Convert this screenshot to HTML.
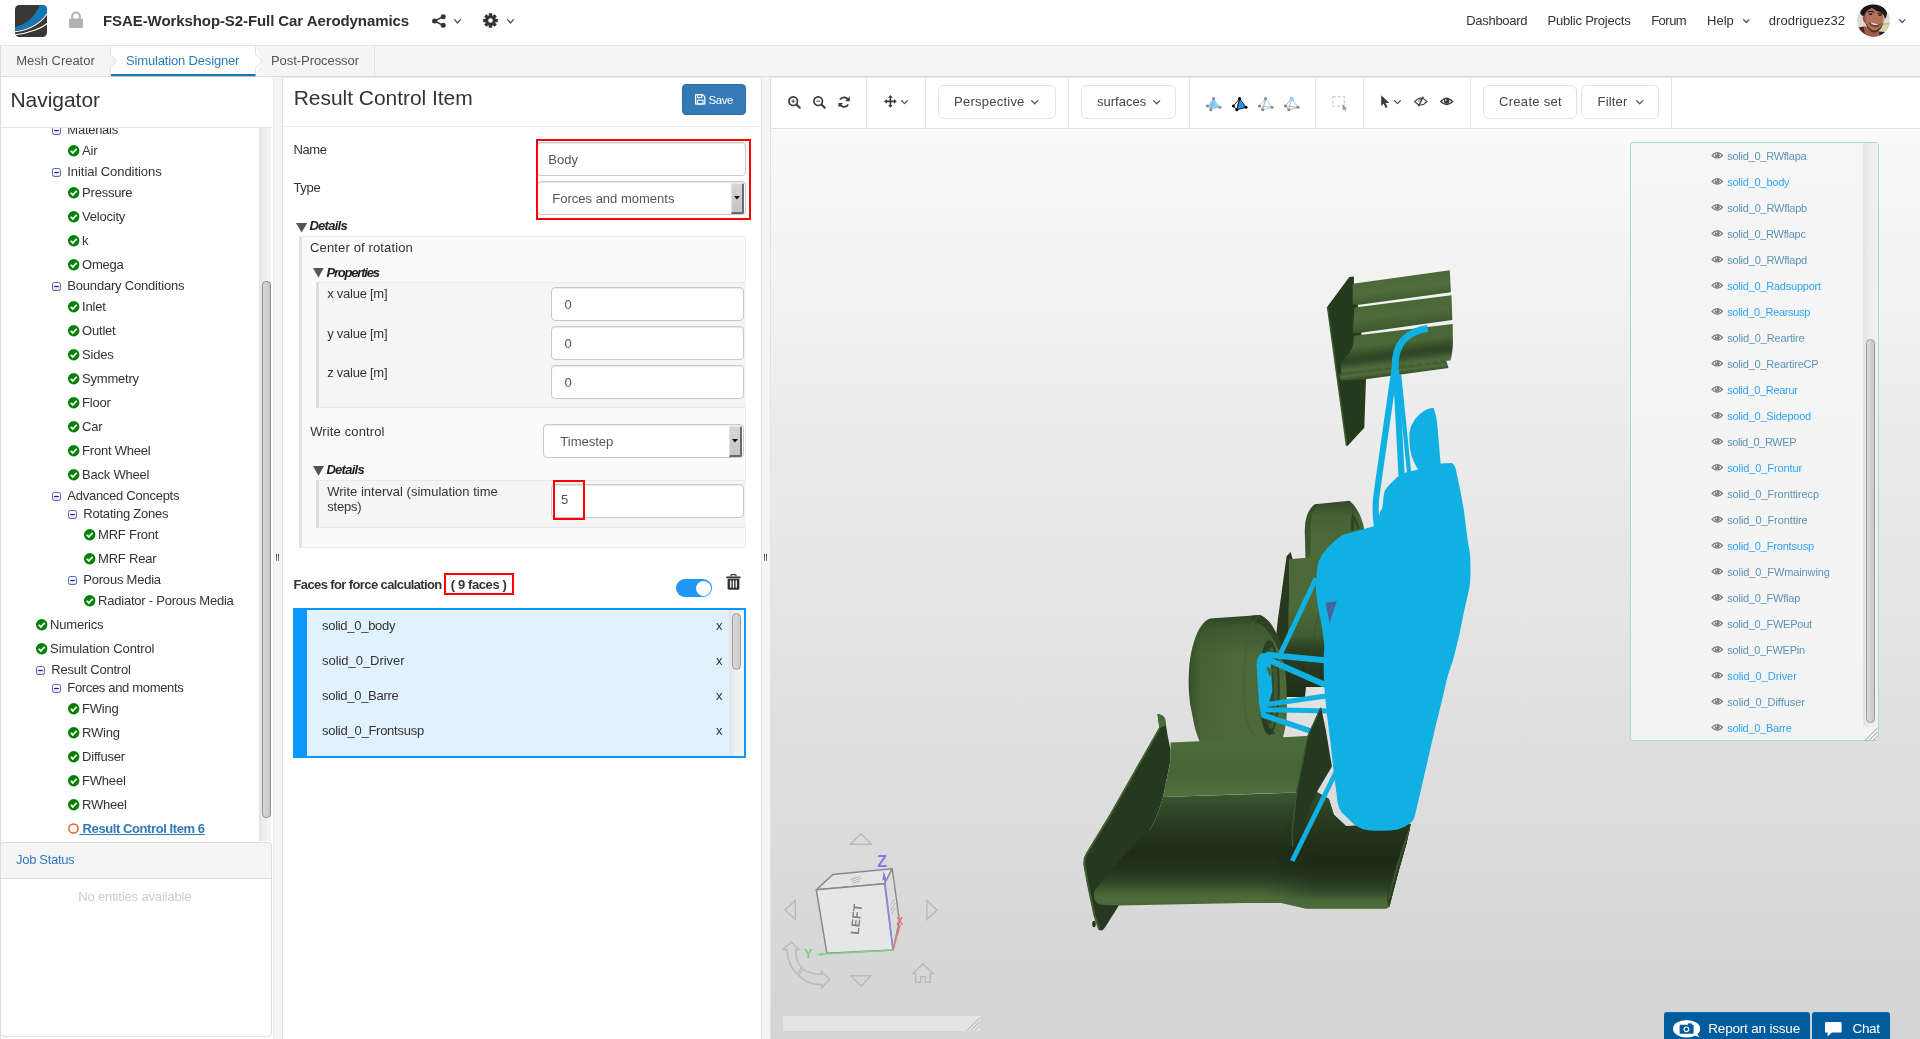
<!DOCTYPE html>
<html><head><meta charset="utf-8"><title>SimScale Workbench</title>
<style>
html,body{margin:0;padding:0;}
body{width:1920px;height:1039px;overflow:hidden;position:relative;background:#f5f5f5;font-family:"Liberation Sans",sans-serif;color:#333;}
.a{position:absolute;box-sizing:border-box;}
.t{position:absolute;line-height:0;white-space:pre;font-family:"Liberation Sans",sans-serif;}
svg{position:absolute;overflow:visible;}
#wrap{position:absolute;left:0;top:0;width:1920px;height:1039px;overflow:hidden;will-change:transform;}

</style></head>
<body>
<div id="wrap">
<div class="a" style="left:0;top:0;width:1920px;height:46px;background:#fff;border-bottom:1px solid #e4e4e4"></div>
<svg style="left:15px;top:5px" width="32" height="32" viewBox="0 0 32 32">
<defs><clipPath id="lg"><rect x="0" y="0" width="32" height="32" rx="4.5" ry="4.5"/></clipPath></defs>
<g clip-path="url(#lg)">
<rect width="32" height="32" fill="#3a3634"/>
<path d="M0 21.9 C 10 20 20 12 24.75 0 L32 0 L32 7.5 C 26 18 13 24.5 0 26 Z" fill="#1277b5"/>
<path d="M0 26.7 C 13 25.2 26 18.8 32 8.7" fill="none" stroke="#fff" stroke-width="1.1"/>
<path d="M0 29.7 C 14 28.2 27 23 32 18.4" fill="none" stroke="#fff" stroke-width="1.1"/>
</g></svg>
<svg style="left:69px;top:11px" width="14" height="17" viewBox="0 0 14 17">
<path d="M3.2 8 V5.2 a3.8 3.8 0 0 1 7.6 0 V8" fill="none" stroke="#b2b2b2" stroke-width="2"/>
<rect x="0" y="7.5" width="14" height="9.5" rx="1.2" fill="#b2b2b2"/></svg>
<span class="t" style="left:103.00px;top:20.80px;font-size:15px;color:#2f2f2f;font-weight:bold;letter-spacing:-0.085px;">FSAE-Workshop-S2-Full Car Aerodynamics</span>
<svg style="left:431.5px;top:13.5px" width="14" height="14" viewBox="0 0 14 14">
<g fill="#333"><circle cx="2.6" cy="7" r="2.5"/><circle cx="11.2" cy="2.7" r="2.5"/><circle cx="11.2" cy="11.3" r="2.5"/></g>
<path d="M2.6 7 L11.2 2.7 M2.6 7 L11.2 11.3" stroke="#333" stroke-width="1.5" fill="none"/></svg>
<svg style="left:453.5px;top:19px" width="7" height="5" viewBox="0 0 7 5"><path d="M0.6 0.6 L3.5 4 L6.4 0.6" fill="none" stroke="#555" stroke-width="1.3" stroke-linecap="round" stroke-linejoin="round"/></svg>
<svg style="left:483px;top:13px" width="15" height="15" viewBox="-7.5 -7.5 15 15">
<g fill="#333"><circle r="5.2"/>
<rect x="-1.7" y="-7.3" width="3.4" height="14.6" rx="0.4"/>
<rect x="-1.7" y="-7.3" width="3.4" height="14.6" rx="0.4" transform="rotate(45)"/><rect x="-1.7" y="-7.3" width="3.4" height="14.6" rx="0.4" transform="rotate(90)"/><rect x="-1.7" y="-7.3" width="3.4" height="14.6" rx="0.4" transform="rotate(135)"/></g>
<circle r="2.3" fill="#fff"/></svg>
<svg style="left:507px;top:19px" width="7" height="5" viewBox="0 0 7 5"><path d="M0.6 0.6 L3.5 4 L6.4 0.6" fill="none" stroke="#555" stroke-width="1.3" stroke-linecap="round" stroke-linejoin="round"/></svg>
<span class="t" style="left:1466.30px;top:20.50px;font-size:13px;color:#333;letter-spacing:-0.312px;">Dashboard</span>
<span class="t" style="left:1547.50px;top:20.50px;font-size:13px;color:#333;letter-spacing:-0.199px;">Public Projects</span>
<span class="t" style="left:1651.20px;top:20.50px;font-size:13px;color:#333;letter-spacing:-0.512px;">Forum</span>
<span class="t" style="left:1707.00px;top:20.50px;font-size:13px;color:#333;letter-spacing:0.013px;">Help</span>
<svg style="left:1743px;top:19px" width="6.5" height="4.5" viewBox="0 0 6.5 4.5"><path d="M0.6 0.6 L3.25 3.5 L5.9 0.6" fill="none" stroke="#555" stroke-width="1.3" stroke-linecap="round" stroke-linejoin="round"/></svg>
<span class="t" style="left:1768.80px;top:20.50px;font-size:13px;color:#333;letter-spacing:0.026px;">drodriguez32</span>
<svg style="left:1899px;top:19px" width="6.5" height="4.5" viewBox="0 0 6.5 4.5"><path d="M0.6 0.6 L3.25 3.5 L5.9 0.6" fill="none" stroke="#555" stroke-width="1.3" stroke-linecap="round" stroke-linejoin="round"/></svg>
<svg style="left:1857px;top:3.5px" width="33" height="33" viewBox="0 0 33 33">
<defs><clipPath id="av"><circle cx="16.5" cy="16.5" r="16.4"/></clipPath>
<filter id="avb" x="-10%" y="-10%" width="120%" height="120%"><feGaussianBlur stdDeviation="0.55"/></filter></defs>
<g clip-path="url(#av)"><g filter="url(#avb)">
<rect width="33" height="33" fill="#dcdcd7"/>
<path d="M25 19.5 L33 19 L33 29 L22 28 Z" fill="#d9d2ae"/>
<path d="M26 19.3 L33 18.8 L33 20.6 L26 21 Z" fill="#c9b58e"/>
<path d="M1 23.5 L7 22.4 L10 33 L1 33 Z" fill="#5a2228"/>
<path d="M21 27.5 L29 28 L26 33 L20 33 Z" fill="#1b2344"/>
<path d="M7 22 Q12 24 22 26 L22.5 33 L8 33 Z" fill="#9a5f47"/>
<path d="M7.8 9 Q7 3.5 16 2.5 Q25 3 26.5 10 L26.5 18 Q25.5 25 20 27.8 Q16.5 29.3 13 26.5 Q8.5 22 7.6 15 Z" fill="#b27358"/>
<path d="M8 11 Q9 16 8.4 19.5 Q5.8 17.5 5.6 13.5 Q6 11 8 11 Z" fill="#8a4f3c"/>
<path d="M8 17.5 Q9 23 14 27.6 Q17 29.6 20.5 27.6 Q25 24.5 26 18.5 Q24.5 23 20.5 25.6 Q17 27.6 14 25.2 Q10 21.8 8 17.5 Z" fill="#4a2f28"/>
<path d="M11 18.5 Q14 18 15.5 19.6 Q18 21.8 22 20.8 Q23.5 19.8 24.5 18.6 Q23.6 22.2 20 23.4 Q16 23.8 13.5 21.4 Q12 19.8 11 18.5 Z" fill="#7c4236"/>
<path d="M13.8 19.2 Q17 21.6 20.4 21 L20 20 Q16.8 20 14.4 18.6 Z" fill="#f1e7e2"/>
<path d="M3.2 9.5 Q3.5 4 9.5 1.8 Q16.5 -0.8 23.5 2 Q29.5 4.8 30 9.5 Q29.8 13 27.6 15.4 Q27.8 10.5 24 8.4 Q19 7.2 15 4 Q12.5 4.6 10.4 6.4 Q8.2 8.4 7.4 12 Q5 12.4 3.2 9.5 Z" fill="#1d1818"/>
<path d="M10.4 7.4 Q13.5 5.8 17.6 8 L17.4 8.9 Q13.6 7.2 10.6 8.6 Z" fill="#2a1a18"/>
<path d="M20 9.2 Q23 8.4 25.6 9.4 L25.5 10.2 Q23 9.5 20.2 10.1 Z" fill="#2a1a18"/>
<ellipse cx="13.6" cy="10.2" rx="1.9" ry="0.9" fill="#3b241f"/><ellipse cx="23" cy="11.2" rx="1.8" ry="0.9" fill="#3b241f"/>
</g></g></svg>
<div class="a" style="left:0;top:46px;width:1920px;height:31px;background:#f5f5f5;border-bottom:1px solid #ddd"></div>
<div class="a" style="left:0;top:46px;width:1px;height:31px;background:#ddd"></div>
<svg style="left:104px;top:46px" width="166" height="31" viewBox="0 0 166 31">
<path d="M6.5 0 L151.5 0 L158 15 L151.5 30 L6.5 30 L6.5 22 L12.5 15 L6.5 8 Z" fill="#fff"/>
<path d="M6.5 0 L6.5 8 L12.5 15 L6.5 22 L6.5 30" fill="none" stroke="#e3e3e3" stroke-width="1"/>
<path d="M151.5 0 L151.5 8 L158 15 L151.5 22 L151.5 30" fill="none" stroke="#e3e3e3" stroke-width="1"/>
<rect x="7" y="28" width="144.5" height="2.2" fill="#1b75b3"/>
</svg>
<div class="a" style="left:374px;top:46px;width:1px;height:30px;background:#e3e3e3"></div>
<span class="t" style="left:16.30px;top:60.50px;font-size:13px;color:#555;letter-spacing:-0.029px;">Mesh Creator</span>
<span class="t" style="left:126.00px;top:60.50px;font-size:13px;color:#2c7db7;letter-spacing:-0.16px;">Simulation Designer</span>
<span class="t" style="left:271.00px;top:60.50px;font-size:13px;color:#555;letter-spacing:-0.062px;">Post-Processor</span>
<div class="a" style="left:0;top:77px;width:273px;height:962px;background:#fff;border-left:1px solid #ddd"></div>
<div class="a" style="left:273px;top:77px;width:1px;height:962px;background:#ebebeb"></div>
<span class="t" style="left:10.50px;top:99.72px;font-size:21px;color:#333;letter-spacing:-0.043px;">Navigator</span>
<div class="a" style="left:1px;top:127px;width:271px;height:1px;background:#e6e6e6"></div>
<div class="a" style="left:282px;top:77px;width:480px;height:962px;background:#fff;border-left:1px solid #e2e2e2;border-right:1px solid #e2e2e2;border-top:1px solid #e6e6e6"></div>
<div class="a" style="left:770px;top:77px;width:1150px;height:962px;background:#fff;border-left:1px solid #e2e2e2;border-top:1px solid #e6e6e6"></div>
<div class="a" style="left:276px;top:554px;width:1px;height:7px;background:linear-gradient(180deg,#3c3c3c,#8e8e8e)"></div><div class="a" style="left:278px;top:554px;width:1px;height:7px;background:linear-gradient(180deg,#3c3c3c,#8e8e8e)"></div>
<div class="a" style="left:764px;top:554px;width:1px;height:7px;background:linear-gradient(180deg,#3c3c3c,#8e8e8e)"></div><div class="a" style="left:766px;top:554px;width:1px;height:7px;background:linear-gradient(180deg,#3c3c3c,#8e8e8e)"></div>
<div class="a" style="left:1px;top:128px;width:258px;height:713px;overflow:hidden"><div class="a" style="left:-1px;top:-128px;width:0;height:0">
<svg style="left:52px;top:125.9px" width="9" height="9" viewBox="0 0 9 9"><defs><linearGradient id="mg" x1="0" y1="0" x2="0" y2="1"><stop offset="0.45" stop-color="#fff"/><stop offset="1" stop-color="#d8d8d8"/></linearGradient></defs><rect x="0.5" y="0.5" width="8" height="8" rx="1.8" fill="url(#mg)" stroke="#5566c0" stroke-width="1"/><rect x="2.2" y="3.9" width="4.6" height="1.2" fill="#1010c8"/></svg>
<span class="t" style="left:67.30px;top:129.70px;font-size:13px;color:#333;letter-spacing:-0.22px;">Materials</span>
<svg style="left:67.8px;top:144.6px" width="11.4" height="11.4" viewBox="0 0 12 12"><circle cx="6" cy="6" r="6" fill="#008000"/><path d="M2.9 6.2 L5.1 8.4 L9.2 4.1" fill="none" stroke="#fff" stroke-width="1.9" stroke-linecap="butt" stroke-linejoin="miter"/></svg>
<span class="t" style="left:82.10px;top:150.90px;font-size:13px;color:#333;letter-spacing:-0.22px;">Air</span>
<svg style="left:52px;top:167.9px" width="9" height="9" viewBox="0 0 9 9"><defs><linearGradient id="mg" x1="0" y1="0" x2="0" y2="1"><stop offset="0.45" stop-color="#fff"/><stop offset="1" stop-color="#d8d8d8"/></linearGradient></defs><rect x="0.5" y="0.5" width="8" height="8" rx="1.8" fill="url(#mg)" stroke="#5566c0" stroke-width="1"/><rect x="2.2" y="3.9" width="4.6" height="1.2" fill="#1010c8"/></svg>
<span class="t" style="left:67.30px;top:171.70px;font-size:13px;color:#333;letter-spacing:-0.061px;">Initial Conditions</span>
<svg style="left:67.8px;top:186.6px" width="11.4" height="11.4" viewBox="0 0 12 12"><circle cx="6" cy="6" r="6" fill="#008000"/><path d="M2.9 6.2 L5.1 8.4 L9.2 4.1" fill="none" stroke="#fff" stroke-width="1.9" stroke-linecap="butt" stroke-linejoin="miter"/></svg>
<span class="t" style="left:82.10px;top:192.90px;font-size:13px;color:#333;letter-spacing:-0.22px;">Pressure</span>
<svg style="left:67.8px;top:210.6px" width="11.4" height="11.4" viewBox="0 0 12 12"><circle cx="6" cy="6" r="6" fill="#008000"/><path d="M2.9 6.2 L5.1 8.4 L9.2 4.1" fill="none" stroke="#fff" stroke-width="1.9" stroke-linecap="butt" stroke-linejoin="miter"/></svg>
<span class="t" style="left:82.10px;top:216.90px;font-size:13px;color:#333;letter-spacing:-0.22px;">Velocity</span>
<svg style="left:67.8px;top:234.6px" width="11.4" height="11.4" viewBox="0 0 12 12"><circle cx="6" cy="6" r="6" fill="#008000"/><path d="M2.9 6.2 L5.1 8.4 L9.2 4.1" fill="none" stroke="#fff" stroke-width="1.9" stroke-linecap="butt" stroke-linejoin="miter"/></svg>
<span class="t" style="left:82.10px;top:240.90px;font-size:13px;color:#333;letter-spacing:-0.22px;">k</span>
<svg style="left:67.8px;top:258.6px" width="11.4" height="11.4" viewBox="0 0 12 12"><circle cx="6" cy="6" r="6" fill="#008000"/><path d="M2.9 6.2 L5.1 8.4 L9.2 4.1" fill="none" stroke="#fff" stroke-width="1.9" stroke-linecap="butt" stroke-linejoin="miter"/></svg>
<span class="t" style="left:82.10px;top:264.90px;font-size:13px;color:#333;letter-spacing:-0.22px;">Omega</span>
<svg style="left:52px;top:281.90000000000003px" width="9" height="9" viewBox="0 0 9 9"><defs><linearGradient id="mg" x1="0" y1="0" x2="0" y2="1"><stop offset="0.45" stop-color="#fff"/><stop offset="1" stop-color="#d8d8d8"/></linearGradient></defs><rect x="0.5" y="0.5" width="8" height="8" rx="1.8" fill="url(#mg)" stroke="#5566c0" stroke-width="1"/><rect x="2.2" y="3.9" width="4.6" height="1.2" fill="#1010c8"/></svg>
<span class="t" style="left:67.30px;top:285.70px;font-size:13px;color:#333;letter-spacing:-0.195px;">Boundary Conditions</span>
<svg style="left:67.8px;top:300.6px" width="11.4" height="11.4" viewBox="0 0 12 12"><circle cx="6" cy="6" r="6" fill="#008000"/><path d="M2.9 6.2 L5.1 8.4 L9.2 4.1" fill="none" stroke="#fff" stroke-width="1.9" stroke-linecap="butt" stroke-linejoin="miter"/></svg>
<span class="t" style="left:82.10px;top:306.90px;font-size:13px;color:#333;letter-spacing:-0.22px;">Inlet</span>
<svg style="left:67.8px;top:324.6px" width="11.4" height="11.4" viewBox="0 0 12 12"><circle cx="6" cy="6" r="6" fill="#008000"/><path d="M2.9 6.2 L5.1 8.4 L9.2 4.1" fill="none" stroke="#fff" stroke-width="1.9" stroke-linecap="butt" stroke-linejoin="miter"/></svg>
<span class="t" style="left:82.10px;top:330.90px;font-size:13px;color:#333;letter-spacing:-0.22px;">Outlet</span>
<svg style="left:67.8px;top:348.6px" width="11.4" height="11.4" viewBox="0 0 12 12"><circle cx="6" cy="6" r="6" fill="#008000"/><path d="M2.9 6.2 L5.1 8.4 L9.2 4.1" fill="none" stroke="#fff" stroke-width="1.9" stroke-linecap="butt" stroke-linejoin="miter"/></svg>
<span class="t" style="left:82.10px;top:354.90px;font-size:13px;color:#333;letter-spacing:-0.22px;">Sides</span>
<svg style="left:67.8px;top:372.6px" width="11.4" height="11.4" viewBox="0 0 12 12"><circle cx="6" cy="6" r="6" fill="#008000"/><path d="M2.9 6.2 L5.1 8.4 L9.2 4.1" fill="none" stroke="#fff" stroke-width="1.9" stroke-linecap="butt" stroke-linejoin="miter"/></svg>
<span class="t" style="left:82.10px;top:378.90px;font-size:13px;color:#333;letter-spacing:-0.22px;">Symmetry</span>
<svg style="left:67.8px;top:396.6px" width="11.4" height="11.4" viewBox="0 0 12 12"><circle cx="6" cy="6" r="6" fill="#008000"/><path d="M2.9 6.2 L5.1 8.4 L9.2 4.1" fill="none" stroke="#fff" stroke-width="1.9" stroke-linecap="butt" stroke-linejoin="miter"/></svg>
<span class="t" style="left:82.10px;top:402.90px;font-size:13px;color:#333;letter-spacing:-0.22px;">Floor</span>
<svg style="left:67.8px;top:420.6px" width="11.4" height="11.4" viewBox="0 0 12 12"><circle cx="6" cy="6" r="6" fill="#008000"/><path d="M2.9 6.2 L5.1 8.4 L9.2 4.1" fill="none" stroke="#fff" stroke-width="1.9" stroke-linecap="butt" stroke-linejoin="miter"/></svg>
<span class="t" style="left:82.10px;top:426.90px;font-size:13px;color:#333;letter-spacing:-0.22px;">Car</span>
<svg style="left:67.8px;top:444.6px" width="11.4" height="11.4" viewBox="0 0 12 12"><circle cx="6" cy="6" r="6" fill="#008000"/><path d="M2.9 6.2 L5.1 8.4 L9.2 4.1" fill="none" stroke="#fff" stroke-width="1.9" stroke-linecap="butt" stroke-linejoin="miter"/></svg>
<span class="t" style="left:82.10px;top:450.90px;font-size:13px;color:#333;letter-spacing:-0.22px;">Front Wheel</span>
<svg style="left:67.8px;top:468.6px" width="11.4" height="11.4" viewBox="0 0 12 12"><circle cx="6" cy="6" r="6" fill="#008000"/><path d="M2.9 6.2 L5.1 8.4 L9.2 4.1" fill="none" stroke="#fff" stroke-width="1.9" stroke-linecap="butt" stroke-linejoin="miter"/></svg>
<span class="t" style="left:82.10px;top:474.90px;font-size:13px;color:#333;letter-spacing:-0.22px;">Back Wheel</span>
<svg style="left:52px;top:492.40000000000003px" width="9" height="9" viewBox="0 0 9 9"><defs><linearGradient id="mg" x1="0" y1="0" x2="0" y2="1"><stop offset="0.45" stop-color="#fff"/><stop offset="1" stop-color="#d8d8d8"/></linearGradient></defs><rect x="0.5" y="0.5" width="8" height="8" rx="1.8" fill="url(#mg)" stroke="#5566c0" stroke-width="1"/><rect x="2.2" y="3.9" width="4.6" height="1.2" fill="#1010c8"/></svg>
<span class="t" style="left:67.30px;top:496.20px;font-size:13px;color:#333;letter-spacing:-0.262px;">Advanced Concepts</span>
<svg style="left:68px;top:510.4px" width="9" height="9" viewBox="0 0 9 9"><defs><linearGradient id="mg" x1="0" y1="0" x2="0" y2="1"><stop offset="0.45" stop-color="#fff"/><stop offset="1" stop-color="#d8d8d8"/></linearGradient></defs><rect x="0.5" y="0.5" width="8" height="8" rx="1.8" fill="url(#mg)" stroke="#5566c0" stroke-width="1"/><rect x="2.2" y="3.9" width="4.6" height="1.2" fill="#1010c8"/></svg>
<span class="t" style="left:83.30px;top:514.20px;font-size:13px;color:#333;letter-spacing:-0.22px;">Rotating Zones</span>
<svg style="left:83.8px;top:528.6px" width="11.4" height="11.4" viewBox="0 0 12 12"><circle cx="6" cy="6" r="6" fill="#008000"/><path d="M2.9 6.2 L5.1 8.4 L9.2 4.1" fill="none" stroke="#fff" stroke-width="1.9" stroke-linecap="butt" stroke-linejoin="miter"/></svg>
<span class="t" style="left:98.10px;top:534.90px;font-size:13px;color:#333;letter-spacing:-0.22px;">MRF Front</span>
<svg style="left:83.8px;top:552.6px" width="11.4" height="11.4" viewBox="0 0 12 12"><circle cx="6" cy="6" r="6" fill="#008000"/><path d="M2.9 6.2 L5.1 8.4 L9.2 4.1" fill="none" stroke="#fff" stroke-width="1.9" stroke-linecap="butt" stroke-linejoin="miter"/></svg>
<span class="t" style="left:98.10px;top:558.90px;font-size:13px;color:#333;letter-spacing:-0.22px;">MRF Rear</span>
<svg style="left:68px;top:575.9px" width="9" height="9" viewBox="0 0 9 9"><defs><linearGradient id="mg" x1="0" y1="0" x2="0" y2="1"><stop offset="0.45" stop-color="#fff"/><stop offset="1" stop-color="#d8d8d8"/></linearGradient></defs><rect x="0.5" y="0.5" width="8" height="8" rx="1.8" fill="url(#mg)" stroke="#5566c0" stroke-width="1"/><rect x="2.2" y="3.9" width="4.6" height="1.2" fill="#1010c8"/></svg>
<span class="t" style="left:83.30px;top:579.70px;font-size:13px;color:#333;letter-spacing:-0.22px;">Porous Media</span>
<svg style="left:83.8px;top:594.6px" width="11.4" height="11.4" viewBox="0 0 12 12"><circle cx="6" cy="6" r="6" fill="#008000"/><path d="M2.9 6.2 L5.1 8.4 L9.2 4.1" fill="none" stroke="#fff" stroke-width="1.9" stroke-linecap="butt" stroke-linejoin="miter"/></svg>
<span class="t" style="left:98.10px;top:600.90px;font-size:13px;color:#333;letter-spacing:-0.235px;">Radiator - Porous Media</span>
<svg style="left:35.8px;top:618.6px" width="11.4" height="11.4" viewBox="0 0 12 12"><circle cx="6" cy="6" r="6" fill="#008000"/><path d="M2.9 6.2 L5.1 8.4 L9.2 4.1" fill="none" stroke="#fff" stroke-width="1.9" stroke-linecap="butt" stroke-linejoin="miter"/></svg>
<span class="t" style="left:50.10px;top:624.90px;font-size:13px;color:#333;letter-spacing:-0.22px;">Numerics</span>
<svg style="left:35.8px;top:642.6px" width="11.4" height="11.4" viewBox="0 0 12 12"><circle cx="6" cy="6" r="6" fill="#008000"/><path d="M2.9 6.2 L5.1 8.4 L9.2 4.1" fill="none" stroke="#fff" stroke-width="1.9" stroke-linecap="butt" stroke-linejoin="miter"/></svg>
<span class="t" style="left:50.10px;top:648.90px;font-size:13px;color:#333;letter-spacing:-0.107px;">Simulation Control</span>
<svg style="left:36px;top:665.9px" width="9" height="9" viewBox="0 0 9 9"><defs><linearGradient id="mg" x1="0" y1="0" x2="0" y2="1"><stop offset="0.45" stop-color="#fff"/><stop offset="1" stop-color="#d8d8d8"/></linearGradient></defs><rect x="0.5" y="0.5" width="8" height="8" rx="1.8" fill="url(#mg)" stroke="#5566c0" stroke-width="1"/><rect x="2.2" y="3.9" width="4.6" height="1.2" fill="#1010c8"/></svg>
<span class="t" style="left:51.30px;top:669.70px;font-size:13px;color:#333;letter-spacing:-0.22px;">Result Control</span>
<svg style="left:52px;top:683.9px" width="9" height="9" viewBox="0 0 9 9"><defs><linearGradient id="mg" x1="0" y1="0" x2="0" y2="1"><stop offset="0.45" stop-color="#fff"/><stop offset="1" stop-color="#d8d8d8"/></linearGradient></defs><rect x="0.5" y="0.5" width="8" height="8" rx="1.8" fill="url(#mg)" stroke="#5566c0" stroke-width="1"/><rect x="2.2" y="3.9" width="4.6" height="1.2" fill="#1010c8"/></svg>
<span class="t" style="left:67.30px;top:687.70px;font-size:13px;color:#333;letter-spacing:-0.334px;">Forces and moments</span>
<svg style="left:67.8px;top:702.6px" width="11.4" height="11.4" viewBox="0 0 12 12"><circle cx="6" cy="6" r="6" fill="#008000"/><path d="M2.9 6.2 L5.1 8.4 L9.2 4.1" fill="none" stroke="#fff" stroke-width="1.9" stroke-linecap="butt" stroke-linejoin="miter"/></svg>
<span class="t" style="left:82.10px;top:708.90px;font-size:13px;color:#333;letter-spacing:-0.22px;">FWing</span>
<svg style="left:67.8px;top:726.6px" width="11.4" height="11.4" viewBox="0 0 12 12"><circle cx="6" cy="6" r="6" fill="#008000"/><path d="M2.9 6.2 L5.1 8.4 L9.2 4.1" fill="none" stroke="#fff" stroke-width="1.9" stroke-linecap="butt" stroke-linejoin="miter"/></svg>
<span class="t" style="left:82.10px;top:732.90px;font-size:13px;color:#333;letter-spacing:-0.22px;">RWing</span>
<svg style="left:67.8px;top:750.6px" width="11.4" height="11.4" viewBox="0 0 12 12"><circle cx="6" cy="6" r="6" fill="#008000"/><path d="M2.9 6.2 L5.1 8.4 L9.2 4.1" fill="none" stroke="#fff" stroke-width="1.9" stroke-linecap="butt" stroke-linejoin="miter"/></svg>
<span class="t" style="left:82.10px;top:756.90px;font-size:13px;color:#333;letter-spacing:-0.22px;">Diffuser</span>
<svg style="left:67.8px;top:774.6px" width="11.4" height="11.4" viewBox="0 0 12 12"><circle cx="6" cy="6" r="6" fill="#008000"/><path d="M2.9 6.2 L5.1 8.4 L9.2 4.1" fill="none" stroke="#fff" stroke-width="1.9" stroke-linecap="butt" stroke-linejoin="miter"/></svg>
<span class="t" style="left:82.10px;top:780.90px;font-size:13px;color:#333;letter-spacing:-0.22px;">FWheel</span>
<svg style="left:67.8px;top:798.6px" width="11.4" height="11.4" viewBox="0 0 12 12"><circle cx="6" cy="6" r="6" fill="#008000"/><path d="M2.9 6.2 L5.1 8.4 L9.2 4.1" fill="none" stroke="#fff" stroke-width="1.9" stroke-linecap="butt" stroke-linejoin="miter"/></svg>
<span class="t" style="left:82.10px;top:804.90px;font-size:13px;color:#333;letter-spacing:-0.22px;">RWheel</span>
<svg style="left:68px;top:822.6px" width="11" height="11" viewBox="0 0 11 11"><circle cx="5.5" cy="5.5" r="4.6" fill="#fff" stroke="#e2602a" stroke-width="1.5"/></svg>
<span class="t" style="left:79.40px;top:828.50px;font-size:13px;color:#3278b4;font-weight:bold;text-decoration:underline;letter-spacing:-0.412px;"> Result Control Item 6</span>
</div></div>
<div class="a" style="left:259px;top:128px;width:12px;height:713px;background:linear-gradient(90deg,#e1e1e1,#ececec 30%,#f4f4f4)"></div>
<div class="a" style="left:262px;top:281px;width:9px;height:537px;background:linear-gradient(90deg,#d9d9d9,#c6c6c6);border:1px solid #8f8f8f;border-radius:4px"></div>
<div class="a" style="left:0;top:842px;width:272px;height:37px;background:#f5f5f5;border:1px solid #ddd;border-radius:4px 4px 0 0"></div>
<span class="t" style="left:16.10px;top:859.50px;font-size:13px;color:#337ab7;letter-spacing:-0.324px;">Job Status</span>
<div class="a" style="left:0;top:878px;width:272px;height:159px;background:#fff;border:1px solid #ddd;border-radius:0 0 4px 4px"></div>
<span class="t" style="left:78.20px;top:896.50px;font-size:13px;color:#cccccc;letter-spacing:-0.15px;">No entities available</span>
<span class="t" style="left:293.70px;top:97.72px;font-size:21px;color:#333;letter-spacing:-0.039px;">Result Control Item</span>
<div class="a" style="left:682px;top:84px;width:64px;height:31px;background:#337ab7;border:1px solid #2e6da4;border-radius:4px"></div>
<svg style="left:695px;top:94.3px" width="10.4" height="10.6" viewBox="0 0 10.4 10.6">
<path d="M0.6 0.6 H7.6 L9.8 2.8 V10 H0.6 Z" fill="none" stroke="#fff" stroke-width="1.2" stroke-linejoin="round"/>
<rect x="2.6" y="0.6" width="4.2" height="3" fill="none" stroke="#fff" stroke-width="1.1"/>
<rect x="2.4" y="6.2" width="5.6" height="3.8" fill="none" stroke="#fff" stroke-width="1.1"/></svg>
<span class="t" style="left:708.50px;top:99.92px;font-size:11.5px;color:#fff;letter-spacing:-0.43px;">Save</span>
<div class="a" style="left:283px;top:126px;width:478px;height:1px;background:#ececec"></div>
<span class="t" style="left:293.60px;top:149.50px;font-size:13px;color:#333;letter-spacing:-0.447px;">Name</span>
<span class="t" style="left:293.40px;top:188.00px;font-size:13px;color:#333;letter-spacing:-0.247px;">Type</span>
<div class="a" style="left:537px;top:142px;width:209px;height:34px;background:#fff;border:1px solid #c9c9c9;border-radius:4px;box-shadow:inset 0 1px 1px rgba(0,0,0,.09)"></div>
<span class="t" style="left:548.30px;top:159.80px;font-size:13px;color:#555;">Body</span>
<div class="a" style="left:537px;top:181px;width:209px;height:34px;background:#fff;border:1px solid #c9c9c9;border-radius:4px;box-shadow:inset 0 1px 1px rgba(0,0,0,.09)"></div><div class="a" style="left:731.4px;top:183px;width:12.6px;height:30.5px;background:linear-gradient(180deg,#d6d6d6,#c4c4c4);border-right:2px solid #6a6a6a;border-bottom:2px solid #6a6a6a;border-top:1px solid #e8e8e8;border-left:1px solid #e0e0e0;border-radius:0 2px 2px 0"></div><svg style="left:734.0px;top:196.3px" width="6" height="3.4" viewBox="0 0 6 3.4"><path d="M0 0 H6 L3 3.4 Z" fill="#111"/></svg>
<span class="t" style="left:552.30px;top:198.80px;font-size:13px;color:#555;">Forces and moments</span>
<div class="a" style="left:536px;top:139px;width:215px;height:81px;border:2px solid #f00"></div>
<svg style="left:295.8px;top:222.8px" width="11.2" height="9.6" viewBox="0 0 11.2 9.6"><path d="M0 0 H11.2 L5.6 9.6 Z" fill="#555"/></svg>
<span class="t" style="left:309.40px;top:225.90px;font-size:13px;color:#222;font-weight:bold;font-style:italic;letter-spacing:-0.734px;">Details</span>
<div class="a" style="left:299px;top:236.3px;width:447px;height:311.3px;background:#fafafa;border:1px solid #ececec;border-left:3px solid #e3e3e3"></div>
<span class="t" style="left:310.10px;top:248.40px;font-size:13px;color:#333;letter-spacing:0.136px;">Center of rotation</span>
<svg style="left:313.2px;top:268.2px" width="10.8" height="9.6" viewBox="0 0 10.8 9.6"><path d="M0 0 H10.8 L5.4 9.6 Z" fill="#555"/></svg>
<span class="t" style="left:326.50px;top:272.60px;font-size:13px;color:#222;font-weight:bold;font-style:italic;letter-spacing:-1.201px;">Properties</span>
<div class="a" style="left:316.4px;top:282.2px;width:429.6px;height:126px;background:#f5f5f5;border:1px solid #e9e9e9;border-left:3px solid #dcdcdc;border-right:none"></div>
<span class="t" style="left:327.20px;top:294.40px;font-size:13px;color:#333;letter-spacing:-0.251px;">x value [m]</span>
<div class="a" style="left:551px;top:287px;width:193px;height:34px;background:#fff;border:1px solid #c9c9c9;border-radius:4px;box-shadow:inset 0 1px 1px rgba(0,0,0,.09)"></div>
<span class="t" style="left:564.40px;top:304.80px;font-size:13px;color:#555;">0</span>
<span class="t" style="left:327.20px;top:333.50px;font-size:13px;color:#333;letter-spacing:-0.251px;">y value [m]</span>
<div class="a" style="left:551px;top:326px;width:193px;height:34px;background:#fff;border:1px solid #c9c9c9;border-radius:4px;box-shadow:inset 0 1px 1px rgba(0,0,0,.09)"></div>
<span class="t" style="left:564.40px;top:343.80px;font-size:13px;color:#555;">0</span>
<span class="t" style="left:327.20px;top:372.50px;font-size:13px;color:#333;letter-spacing:-0.251px;">z value [m]</span>
<div class="a" style="left:551px;top:365px;width:193px;height:34px;background:#fff;border:1px solid #c9c9c9;border-radius:4px;box-shadow:inset 0 1px 1px rgba(0,0,0,.09)"></div>
<span class="t" style="left:564.40px;top:382.80px;font-size:13px;color:#555;">0</span>
<span class="t" style="left:310.20px;top:431.80px;font-size:13px;color:#333;letter-spacing:0.128px;">Write control</span>
<div class="a" style="left:543px;top:424px;width:201px;height:34px;background:#fff;border:1px solid #c9c9c9;border-radius:4px;box-shadow:inset 0 1px 1px rgba(0,0,0,.09)"></div><div class="a" style="left:729.4px;top:426px;width:12.6px;height:30.5px;background:linear-gradient(180deg,#d6d6d6,#c4c4c4);border-right:2px solid #6a6a6a;border-bottom:2px solid #6a6a6a;border-top:1px solid #e8e8e8;border-left:1px solid #e0e0e0;border-radius:0 2px 2px 0"></div><svg style="left:732.0px;top:439.3px" width="6" height="3.4" viewBox="0 0 6 3.4"><path d="M0 0 H6 L3 3.4 Z" fill="#111"/></svg>
<span class="t" style="left:560.30px;top:441.80px;font-size:13px;color:#555;">Timestep</span>
<svg style="left:312.9px;top:466px" width="11" height="9.8" viewBox="0 0 11 9.8"><path d="M0 0 H11 L5.5 9.8 Z" fill="#555"/></svg>
<span class="t" style="left:326.40px;top:469.50px;font-size:13px;color:#222;font-weight:bold;font-style:italic;letter-spacing:-0.734px;">Details</span>
<div class="a" style="left:316.4px;top:479.5px;width:429.6px;height:48px;background:#f5f5f5;border:1px solid #e9e9e9;border-left:3px solid #dcdcdc;border-right:none"></div>
<span class="t" style="left:327.20px;top:491.90px;font-size:13px;color:#333;letter-spacing:0.011px;">Write interval (simulation time</span>
<span class="t" style="left:327.20px;top:507.40px;font-size:13px;color:#333;letter-spacing:-0.201px;">steps)</span>
<div class="a" style="left:551px;top:484px;width:193px;height:34px;background:#fff;border:1px solid #c9c9c9;border-radius:4px;box-shadow:inset 0 1px 1px rgba(0,0,0,.09)"></div>
<span class="t" style="left:561.00px;top:499.80px;font-size:13px;color:#555;">5</span>
<div class="a" style="left:553px;top:480px;width:32px;height:40px;border:2px solid #f00"></div>
<span class="t" style="left:293.50px;top:584.80px;font-size:13px;color:#333;font-weight:bold;letter-spacing:-0.612px;">Faces for force calculation</span>
<div class="a" style="left:444px;top:573px;width:70px;height:22px;border:2px solid #f00"></div>
<span class="t" style="left:450.80px;top:584.80px;font-size:13px;color:#333;font-weight:bold;letter-spacing:-0.399px;">( 9 faces )</span>
<div class="a" style="left:676px;top:579px;width:36px;height:18px;background:#2196f3;border-radius:9px"></div>
<div class="a" style="left:695.5px;top:580.5px;width:15px;height:15px;background:#fff;border-radius:50%"></div>
<svg style="left:726px;top:574px" width="15" height="16" viewBox="0 0 15 16">
<path d="M5 2.4 V1.3 Q5 0.6 5.7 0.6 H9.3 Q10 0.6 10 1.3 V2.4" fill="none" stroke="#333" stroke-width="1.2"/>
<rect x="0.3" y="2.4" width="14.4" height="1.9" rx="0.5" fill="#333"/>
<path d="M1.6 4.8 H13.4 V14.2 Q13.4 15.8 11.8 15.8 H3.2 Q1.6 15.8 1.6 14.2 Z" fill="#333"/>
<g fill="#fff"><rect x="4.1" y="6.3" width="1.3" height="7.4" rx="0.4"/><rect x="6.85" y="6.3" width="1.3" height="7.4" rx="0.4"/><rect x="9.6" y="6.3" width="1.3" height="7.4" rx="0.4"/></g></svg>
<div class="a" style="left:293px;top:608px;width:453px;height:149.7px;background:#e1f2fe;border:2px solid #0a97ff;border-left:14px solid #0a97ff"></div>
<div class="a" style="left:729.2px;top:610px;width:14.8px;height:145.7px;background:linear-gradient(90deg,#dfe3e6,#eef1f3 45%,#f3f5f6)"></div>
<div class="a" style="left:731.8px;top:612.7px;width:9px;height:57px;background:linear-gradient(90deg,#dadada,#c9c9c9);border:1px solid #9a9a9a;border-radius:4.5px"></div>
<span class="t" style="left:322.00px;top:626.20px;font-size:13px;color:#333;letter-spacing:-0.285px;">solid_0_body</span>
<span class="t" style="left:716.00px;top:625.50px;font-size:13px;color:#333;letter-spacing:0.3px;">x</span>
<span class="t" style="left:322.00px;top:661.20px;font-size:13px;color:#333;letter-spacing:-0.042px;">solid_0_Driver</span>
<span class="t" style="left:716.00px;top:660.50px;font-size:13px;color:#333;letter-spacing:0.3px;">x</span>
<span class="t" style="left:322.00px;top:696.20px;font-size:13px;color:#333;letter-spacing:-0.294px;">solid_0_Barre</span>
<span class="t" style="left:716.00px;top:695.50px;font-size:13px;color:#333;letter-spacing:0.3px;">x</span>
<span class="t" style="left:322.00px;top:731.20px;font-size:13px;color:#333;letter-spacing:-0.255px;">solid_0_Frontsusp</span>
<span class="t" style="left:716.00px;top:730.50px;font-size:13px;color:#333;letter-spacing:0.3px;">x</span>
<div class="a" style="left:771px;top:129px;width:1149px;height:910px;background:linear-gradient(180deg,#fafafa 0%,#f4f4f4 12%,#e9e9e9 40%,#dedede 70%,#d4d4d4 100%);overflow:hidden"></div>
<div class="a" style="left:771px;top:128px;width:1149px;height:1px;background:#e2e2e2"></div>
<svg style="left:771px;top:129px" width="1149" height="910" viewBox="771 129 1149 910">
<defs>
<linearGradient id="gF1" gradientUnits="userSpaceOnUse" x1="1400" y1="277" x2="1402.6" y2="299"><stop offset="0" stop-color="#4c6a39"/><stop offset="0.55" stop-color="#4f6e3c"/><stop offset="1" stop-color="#415d32"/></linearGradient>
<linearGradient id="gF2" gradientUnits="userSpaceOnUse" x1="1400" y1="301" x2="1403" y2="327"><stop offset="0" stop-color="#496837"/><stop offset="0.5" stop-color="#4d6c3a"/><stop offset="1" stop-color="#3d582f"/></linearGradient>
<linearGradient id="gF3" gradientUnits="userSpaceOnUse" x1="1400" y1="330" x2="1404.4" y2="367"><stop offset="0" stop-color="#486636"/><stop offset="0.3" stop-color="#4a6938"/><stop offset="0.62" stop-color="#2f4524"/><stop offset="0.72" stop-color="#33492a"/><stop offset="0.9" stop-color="#4d6c3a"/><stop offset="1" stop-color="#476536"/></linearGradient>
<linearGradient id="gLip" gradientUnits="userSpaceOnUse" x1="1400" y1="366" x2="1401.2" y2="376"><stop offset="0" stop-color="#3b5530"/><stop offset="0.4" stop-color="#4f6f3c"/><stop offset="1" stop-color="#2c4022"/></linearGradient>
<linearGradient id="gRW" gradientUnits="userSpaceOnUse" x1="0" y1="501" x2="0" y2="545"><stop offset="0" stop-color="#34492a"/><stop offset="0.35" stop-color="#456234"/><stop offset="1" stop-color="#4d6b3a"/></linearGradient>
<linearGradient id="gPlate" gradientUnits="userSpaceOnUse" x1="0" y1="557" x2="0" y2="697"><stop offset="0" stop-color="#4a6838"/><stop offset="0.35" stop-color="#4d6b3a"/><stop offset="0.56" stop-color="#415c31"/><stop offset="0.66" stop-color="#2b3f22"/><stop offset="0.85" stop-color="#25361d"/><stop offset="1" stop-color="#1f2d18"/></linearGradient>
<linearGradient id="gTire" gradientUnits="userSpaceOnUse" x1="0" y1="615" x2="0" y2="742"><stop offset="0" stop-color="#2e4325"/><stop offset="0.1" stop-color="#3e5931"/><stop offset="0.3" stop-color="#4a6838"/><stop offset="1" stop-color="#4d6b3a"/></linearGradient>
<linearGradient id="gTireX" gradientUnits="userSpaceOnUse" x1="1188" y1="0" x2="1288" y2="0"><stop offset="0" stop-color="#243519" stop-opacity="0.55"/><stop offset="0.12" stop-color="#243519" stop-opacity="0.12"/><stop offset="0.5" stop-color="#243519" stop-opacity="0"/><stop offset="1" stop-color="#243519" stop-opacity="0"/></linearGradient>
<linearGradient id="gFlap" gradientUnits="userSpaceOnUse" x1="0" y1="738" x2="0" y2="797"><stop offset="0" stop-color="#4c6b3a"/><stop offset="0.55" stop-color="#466435"/><stop offset="0.9" stop-color="#4f6f3c"/><stop offset="1" stop-color="#52733e"/></linearGradient>
<linearGradient id="gMain" gradientUnits="userSpaceOnUse" x1="0" y1="795" x2="0" y2="908"><stop offset="0" stop-color="#3a5530"/><stop offset="0.2" stop-color="#2c4023"/><stop offset="0.51" stop-color="#1f2c18"/><stop offset="0.66" stop-color="#243419"/><stop offset="0.76" stop-color="#2e4325"/><stop offset="0.85" stop-color="#415d33"/><stop offset="0.91" stop-color="#4d6d3a"/><stop offset="0.97" stop-color="#4a6938"/><stop offset="1" stop-color="#3c5630"/></linearGradient>
<linearGradient id="gMainR" gradientUnits="userSpaceOnUse" x1="0" y1="800" x2="0" y2="912"><stop offset="0" stop-color="#33492a"/><stop offset="0.25" stop-color="#25361d"/><stop offset="0.55" stop-color="#1d2916"/><stop offset="0.72" stop-color="#25361d"/><stop offset="0.82" stop-color="#34492a"/><stop offset="0.9" stop-color="#48673a"/><stop offset="0.95" stop-color="#4d6d3a"/><stop offset="1" stop-color="#3c5630"/></linearGradient>
<linearGradient id="gBlend" gradientUnits="userSpaceOnUse" x1="1268" y1="0" x2="1316" y2="0"><stop offset="0" stop-color="#fff" stop-opacity="0"/><stop offset="1" stop-color="#fff" stop-opacity="1"/></linearGradient>
<mask id="mR" maskUnits="userSpaceOnUse" x="1000" y="700" width="600" height="300"><rect x="1000" y="700" width="600" height="300" fill="url(#gBlend)"/></mask>
</defs>
<polygon points="1349.3,277.1 1353.9,276.4 1354.2,340 1366,378.7 1364.3,427.8 1347,446.4 1336,370 1327.3,306.8" fill="#263a1d"/>
<path d="M1327.6 307 L1346.6 445.8" stroke="#3d5a2e" stroke-width="1.6" fill="none"/>
<polygon points="1353,283 1357.8,303.5 1358.2,308.5 1361.4,331.5 1361.4,338 1353,338" fill="#263a1d"/>
<polygon points="1352.7,283.7 1449.8,270.2 1450.9,292.3 1357.4,305.1 1352.7,304.5" fill="url(#gF1)"/>
<polygon points="1354.5,307.6 1451.5,295.2 1452.3,320.1 1360.8,332.8 1352.7,332.8" fill="url(#gF2)"/>
<path d="M1353.9 335.7 L1452.7 324.1 L1452.9 341 Q1453 352 1450.4 360.5 L1446.3 360.8 L1341.4 374 L1340.6 365 Q1343 358 1349.9 352.4 Q1354 345 1353.9 335.7 Z" fill="url(#gF3)"/>
<polygon points="1338.9,373.8 1446.3,360.5 1448.6,368 1365.5,379.2 1341,380.6" fill="url(#gLip)"/>
<path d="M1304.8 531.2 Q1304.5 512 1314.9 504.3 L1349.3 500.8 Q1359 508 1363.7 526.2 L1368 560 L1340 610 L1305.5 610 L1305.5 557.5 Z" fill="url(#gRW)"/>
<path d="M1349.3 501 Q1354.5 508 1352.8 513.5 Q1350.3 522 1351.4 531" fill="none" stroke="#3a5230" stroke-width="1.2"/>
<path d="M1352.8 513.5 Q1357.2 520 1359.9 528.6 L1351.6 531 Q1350.4 522 1352.8 513.5 Z" fill="#2c4123"/>
<path d="M1354.6 520 Q1356.6 524 1357.6 529.3 L1353.4 530.5 Q1353.2 524.5 1354.6 520 Z" fill="#3f5a31"/>
<path d="M1304.8 531.2 Q1304.5 512 1314.9 504.3 L1318 504 Q1310 512 1310.5 531 L1310.5 557 L1305.5 557.5 Z" fill="#2c4022" opacity="0.45"/>
<polygon points="1289.7,559.3 1308.8,557.5 1330,556 1330,687 1306,687 1305,697 1283,697 1288,626" fill="url(#gPlate)"/>
<path d="M1318.5 612 Q1313 640 1305.5 686" fill="none" stroke="#34492a" stroke-width="1" opacity="0.7"/>
<polygon points="1286.6,556.2 1290.6,552.1 1292.7,558.9 1289.7,559.3 1288.6,620 1286,665 1273,665 1277.8,620" fill="#273a1e"/>
<path d="M1210.4 618.4 L1260.3 615.1 Q1268 619 1272.4 626.2 Q1279 637 1281.9 647.7 Q1285 662 1285.9 677.4 Q1287.4 700 1286.6 717.8 Q1285.5 729 1283.2 736 L1283 739 L1268.4 740 L1200.4 744 L1199.7 741.6 Q1195 731 1192.9 717.8 Q1189.5 704 1188.9 690.9 Q1188.3 676 1189.5 663.9 Q1191 651 1194.3 641 Q1197 632 1201 626.2 Q1205 620 1210.4 618.4 Z" fill="url(#gTire)"/>
<path d="M1210.4 618.4 L1260.3 615.1 Q1268 619 1272.4 626.2 Q1279 637 1281.9 647.7 Q1285 662 1285.9 677.4 Q1287.4 700 1286.6 717.8 Q1285.5 729 1283.2 736 L1283 739 L1268.4 740 L1200.4 744 L1199.7 741.6 Q1195 731 1192.9 717.8 Q1189.5 704 1188.9 690.9 Q1188.3 676 1189.5 663.9 Q1191 651 1194.3 641 Q1197 632 1201 626.2 Q1205 620 1210.4 618.4 Z" fill="url(#gTireX)"/>
<path d="M1252 615.6 L1260.3 615.1 Q1268 619 1272.4 626.2 Q1279 637 1281.9 647.7 Q1284.5 659 1285.6 672 Q1280 648 1270 634 Q1263 624 1252 620.5 Z" fill="#2b3f22" opacity="0.85"/>
<path d="M1260.3 615.1 Q1250 621 1246.5 645 Q1242 680 1245 712 Q1248 731 1257 738" fill="none" stroke="#43602f" stroke-width="1.2" opacity="0.8"/>
<ellipse cx="1269.2" cy="687.5" rx="10.6" ry="47.5" fill="#2b3f22"/>
<ellipse cx="1271.3" cy="688" rx="6.6" ry="41" fill="#3f5a31"/>
<ellipse cx="1269.5" cy="689" rx="4.2" ry="36" fill="#33492a"/>
<path d="M1264 724 Q1268 735 1275 733" fill="none" stroke="#25361d" stroke-width="1.6" opacity="0.8"/>
<path d="M1157.5 714 Q1163 714.5 1165 718.8 L1167.5 735 L1170.6 750 Q1171 760 1168.8 768.8 L1163.1 796.9 Q1158 815 1150 830 L1118.8 905.6 L1105 927.5 Q1102.6 931.6 1098.8 930 L1093.8 915 L1087.5 885 L1083.8 865 Q1083.4 858 1086.3 853.8 L1110 815 L1159.4 728.1 Z" fill="#263820"/>
<path d="M1159.6 728.4 L1110.2 815.2 L1086.6 854 Q1083.9 858 1084.4 865 L1088.1 885 L1094.4 915 L1099.2 929.4" fill="none" stroke="#3f5e30" stroke-width="2"/>
<path d="M1157.5 714 Q1163 714.5 1165 718.8 L1166 725.5 L1159.4 728.3 Z" fill="#4a6a38"/>
<ellipse cx="1094" cy="924" rx="1.8" ry="3.2" fill="#263820"/>
<path d="M1163.1 796.9 L1296.5 792.6 L1317.7 792.6 L1328.8 798.7 L1333.9 814.8 L1346 826 L1410.7 823.9 L1406.6 843.1 L1398.5 871.4 L1389.4 906.8 L1386.4 908.4 L1305.6 908.4 L1281.4 902.9 L1245 902.9 L1118.8 905.5 L1098.8 904.6 Q1091.5 899 1095 890 Q1128 848 1150 830 Q1158 815 1163.1 796.9 Z" fill="url(#gMain)"/>
<path d="M1296.5 792.6 L1317.7 792.6 L1328.8 798.7 L1333.9 814.8 L1346 826 L1410.7 823.9 L1406.6 843.1 L1398.5 871.4 L1389.4 906.8 L1386.4 908.4 L1305.6 908.4 L1281.4 902.9 L1262 902.9 Z" fill="url(#gMainR)" mask="url(#mR)"/>
<path d="M1410.7 823.9 L1406.6 843.1 L1398.5 871.4 L1389.4 906.8 Q1385.5 903 1388.5 893 Q1395 866 1404 842 Z" fill="#2b3f22"/>
<path d="M1409.6 829 Q1398 860 1388.6 899" fill="none" stroke="#3f5a31" stroke-width="1.2"/>
<path d="M1170.6 742.5 L1255 738.8 L1309.6 735.7 L1296.5 792.6 L1255 793.8 L1163.1 796.9 L1168.8 768.8 Q1171 760 1170.6 750 Z" fill="url(#gFlap)"/>
<g fill="#11b0e3" stroke="none">
<path d="M1394.3 480 L1396.6 477.4 L1404.7 472.8 L1418 469.4 L1440.5 463.6 L1452.1 463 Q1454.5 464.5 1455.6 468.2 L1460.2 490 L1463.7 508.9 L1467.7 540 L1470 554 Q1471 570 1470 584 L1468.9 590 L1463.7 613.1 L1459 636.2 L1453.3 659.3 L1447.5 676.6 L1442.1 700 L1435.4 727 L1428.6 756.6 L1420.5 791.7 L1414.5 817.3 Q1413 821.5 1410.4 823.3 Q1404.5 827.5 1397.6 829.4 Q1388 831.2 1377.4 830.7 Q1370 830.6 1363.9 829.4 Q1358.6 827.8 1354.5 824.7 L1341.7 812.5 Q1338.6 808 1337.6 802.4 L1334.9 780.9 L1332.9 764.7 L1330.2 740.4 L1326.8 713.5 L1325.5 700 L1323.9 682.4 L1323.6 659.3 L1324.4 645.5 L1321.6 624.7 L1318 607.3 L1315.8 590 L1316.4 578.2 Q1316.9 568 1318.7 560.9 Q1322 553.5 1327.3 548.2 Q1334 540.5 1342.3 534.9 L1376.4 525.6 L1380 512 L1382.2 508.3 L1383 503.1 Q1383.4 496 1384.5 491.5 Q1386.5 487 1394.3 480 Z"/>
<path d="M1409.4 432.4 Q1412 417.5 1425.5 409.9 Q1430.5 407.6 1433.6 408.1 Q1436 414 1437.1 422 L1440.5 462.4 L1441 471 L1418.6 470.6 Q1414.5 464 1411.7 456.6 Q1408.6 444 1409.4 432.4 Z"/>
<path d="M1256.5 663.9 Q1257 657 1261.2 653.3 L1269.7 652.9 L1270.5 658 L1271.4 676 L1272.4 690.9 L1268.4 704.4 L1263.5 717 L1261.2 716 L1259 704.4 Z"/>
</g>
<g stroke="#11b0e3" fill="none" stroke-linecap="butt">
<path d="M1427.8 328.4 Q1399 333 1395.6 358.2 L1394.3 381" stroke-width="7"/>
<path d="M1394.4 370 L1377.2 490 Q1374.2 508 1376.9 526" stroke-width="6.2"/>
<path d="M1396 370 L1401.6 476" stroke-width="6.2"/>
<path d="M1399.2 374.6 L1409 472" stroke-width="4.2"/>
<path d="M1316 578.5 L1278.4 658.2" stroke-width="5"/>
<path d="M1266 654.6 L1325 660.3" stroke-width="6"/>
<path d="M1266.5 659 L1325 684.7" stroke-width="6"/>
<path d="M1266 704.6 L1326 696" stroke-width="5"/>
<path d="M1263.4 709.7 L1328 711.1" stroke-width="5"/>
<path d="M1262 714.7 L1312.5 731.7" stroke-width="5.5"/>
</g>
<polygon points="1321,707 1325.8,730 1331.9,766.4 1317.7,790.6 1292.5,848.2 1291.5,831 1296.5,790.6 1307.6,736" fill="#263820"/>
<path d="M1320.6 708 L1307.9 736.2 L1296.9 790.8 L1292 831 L1292.6 847" fill="none" stroke="#3d592f" stroke-width="1.3"/>
<g stroke="#11b0e3" fill="none" stroke-linecap="butt">
<path d="M1335.8 772.5 L1292.2 861" stroke-width="4.8"/>
</g>
<polygon points="1325.6,602.7 1336.8,601.2 1329.4,622.9" fill="#47619d"/>
<polygon points="1266,666.5 1273,669.5 1269.8,677" fill="#4a6838"/>
</svg>
<svg style="left:787.7px;top:95.7px" width="12.6" height="12.6" viewBox="0 0 12.6 12.6"><circle cx="5.2" cy="5.2" r="4.3" fill="none" stroke="#3a3a3a" stroke-width="1.7"/><path d="M8.5 8.5 L11.8 11.8" stroke="#3a3a3a" stroke-width="2" stroke-linecap="round"/><path d="M3.3 5.2 H7.1" stroke="#3a3a3a" stroke-width="0.95"/><path d="M5.2 3.3 V7.1" stroke="#3a3a3a" stroke-width="0.95"/></svg>
<svg style="left:812.7px;top:95.7px" width="12.6" height="12.6" viewBox="0 0 12.6 12.6"><circle cx="5.2" cy="5.2" r="4.3" fill="none" stroke="#3a3a3a" stroke-width="1.7"/><path d="M8.5 8.5 L11.8 11.8" stroke="#3a3a3a" stroke-width="2" stroke-linecap="round"/><path d="M3.3 5.2 H7.1" stroke="#3a3a3a" stroke-width="0.95"/></svg>
<svg style="left:837.6px;top:95.6px" width="12.2" height="12.2" viewBox="0 0 12 12">
<path d="M10.4 4.6 A4.7 4.7 0 0 0 1.9 3.6" fill="none" stroke="#3a3a3a" stroke-width="1.7"/>
<path d="M1.6 7.4 A4.7 4.7 0 0 0 10.1 8.4" fill="none" stroke="#3a3a3a" stroke-width="1.7"/>
<path d="M11.6 0.6 V5.2 H7 Z" fill="#3a3a3a"/><path d="M0.4 11.4 V6.8 H5 Z" fill="#3a3a3a"/></svg>
<div class="a" style="left:866px;top:78px;width:1px;height:50px;background:#e6e6e6"></div>
<div class="a" style="left:925px;top:78px;width:1px;height:50px;background:#e6e6e6"></div>
<div class="a" style="left:1068px;top:78px;width:1px;height:50px;background:#e6e6e6"></div>
<div class="a" style="left:1189px;top:78px;width:1px;height:50px;background:#e6e6e6"></div>
<div class="a" style="left:1315px;top:78px;width:1px;height:50px;background:#e6e6e6"></div>
<div class="a" style="left:1363px;top:78px;width:1px;height:50px;background:#e6e6e6"></div>
<div class="a" style="left:1470px;top:78px;width:1px;height:50px;background:#e6e6e6"></div>
<div class="a" style="left:1671px;top:78px;width:1px;height:50px;background:#e6e6e6"></div>
<svg style="left:884px;top:95.4px" width="12.8" height="12.8" viewBox="-6.4 -6.4 12.8 12.8">
<path d="M0 -4.5 V4.5 M-4.5 0 H4.5" stroke="#3a3a3a" stroke-width="1.6"/>
<g fill="#3a3a3a"><path d="M0 -6.4 L2.3 -3.6 H-2.3 Z"/><path d="M0 6.4 L2.3 3.6 H-2.3 Z"/><path d="M-6.4 0 L-3.6 -2.3 V2.3 Z"/><path d="M6.4 0 L3.6 -2.3 V2.3 Z"/></g></svg>
<svg style="left:901px;top:99.6px" width="7" height="4.6" viewBox="0 0 7 4.6"><path d="M0.6 0.6 L3.5 3.6 L6.4 0.6" fill="none" stroke="#555" stroke-width="1.3" stroke-linecap="round" stroke-linejoin="round"/></svg>
<div class="a" style="left:938.3px;top:85.3px;width:117.5px;height:34.2px;background:#fff;border:1px solid #e2e2e2;border-radius:6px"></div>
<span class="t" style="left:954.00px;top:101.70px;font-size:13px;color:#444;letter-spacing:0.243px;">Perspective</span>
<svg style="left:1031.2px;top:99.6px" width="7.4" height="4.7" viewBox="0 0 7.4 4.7"><path d="M0.6 0.6 L3.7 3.7 L6.800000000000001 0.6" fill="none" stroke="#555" stroke-width="1.3" stroke-linecap="round" stroke-linejoin="round"/></svg>
<div class="a" style="left:1081.3px;top:85.3px;width:95.0px;height:34.2px;background:#fff;border:1px solid #e2e2e2;border-radius:6px"></div>
<span class="t" style="left:1097.00px;top:101.70px;font-size:13px;color:#444;letter-spacing:0.02px;">surfaces</span>
<svg style="left:1153.2px;top:99.6px" width="7.4" height="4.7" viewBox="0 0 7.4 4.7"><path d="M0.6 0.6 L3.7 3.7 L6.800000000000001 0.6" fill="none" stroke="#555" stroke-width="1.3" stroke-linecap="round" stroke-linejoin="round"/></svg>
<div class="a" style="left:1483.3px;top:85.3px;width:94.20000000000005px;height:34.2px;background:#fff;border:1px solid #e2e2e2;border-radius:6px"></div>
<span class="t" style="left:1499.00px;top:101.70px;font-size:13px;color:#444;letter-spacing:0.302px;">Create set</span>
<div class="a" style="left:1581.3px;top:85.3px;width:77.40000000000009px;height:34.2px;background:#fff;border:1px solid #e2e2e2;border-radius:6px"></div>
<span class="t" style="left:1597.50px;top:101.70px;font-size:13px;color:#444;letter-spacing:0.185px;">Filter</span>
<svg style="left:1635.8px;top:99.6px" width="7.4" height="4.7" viewBox="0 0 7.4 4.7"><path d="M0.6 0.6 L3.7 3.7 L6.800000000000001 0.6" fill="none" stroke="#555" stroke-width="1.3" stroke-linecap="round" stroke-linejoin="round"/></svg>
<svg style="left:1205.8px;top:97.2px" width="15.4" height="14.4" viewBox="0 0 15.4 14.4"><polygon points="7.6,1.6 1.4,9.0 4.8,12.8 14.0,10.3" fill="#8ecdf7"/><path d="M7.6 1.6 L4.8 12.8" stroke="#6d9cbd" stroke-width="0.8"/><circle cx="7.6" cy="1.6" r="1.55" fill="#8a8a8a"/><circle cx="1.4" cy="9.0" r="1.55" fill="#8a8a8a"/><circle cx="4.8" cy="12.8" r="1.55" fill="#8a8a8a"/><circle cx="14.0" cy="10.3" r="1.55" fill="#8a8a8a"/></svg>
<svg style="left:1231.8px;top:97.2px" width="15.4" height="14.4" viewBox="0 0 15.4 14.4"><polygon points="7.6,1.6 1.4,9.0 4.8,12.8" fill="#fff" stroke="#111" stroke-width="0.9"/><polygon points="7.6,1.6 4.8,12.8 14.0,10.3" fill="#1e96f0" stroke="#111" stroke-width="0.9"/><circle cx="7.6" cy="1.6" r="1.55" fill="#000"/><circle cx="1.4" cy="9.0" r="1.55" fill="#000"/><circle cx="4.8" cy="12.8" r="1.55" fill="#000"/><circle cx="14.0" cy="10.3" r="1.55" fill="#000"/></svg>
<svg style="left:1257.8px;top:97.2px" width="15.4" height="14.4" viewBox="0 0 15.4 14.4"><polygon points="7.6,1.6 1.4,9.0 4.8,12.8 14.0,10.3" fill="#fff" stroke="#b0b0b0" stroke-width="0.7"/><path d="M1.4 9.0 L14.0 10.3" stroke="#b0b0b0" stroke-width="0.7"/><path d="M7.6 1.6 L4.8 12.8" stroke="#8ecdf7" stroke-width="1.6"/><circle cx="7.6" cy="1.6" r="1.55" fill="#8a8a8a"/><circle cx="1.4" cy="9.0" r="1.55" fill="#8a8a8a"/><circle cx="4.8" cy="12.8" r="1.55" fill="#8a8a8a"/><circle cx="14.0" cy="10.3" r="1.55" fill="#8a8a8a"/></svg>
<svg style="left:1283.8px;top:97.2px" width="15.4" height="14.4" viewBox="0 0 15.4 14.4"><polygon points="7.6,1.6 1.4,9.0 4.8,12.8 14.0,10.3" fill="#fff" stroke="#9a9a9a" stroke-width="0.7"/><path d="M1.4 9.0 L14.0 10.3 M7.6 1.6 L4.8 12.8" stroke="#9a9a9a" stroke-width="0.7"/><circle cx="1.4" cy="9.0" r="1.55" fill="#8a8a8a"/><circle cx="4.8" cy="12.8" r="1.55" fill="#8a8a8a"/><circle cx="14.0" cy="10.3" r="1.55" fill="#8a8a8a"/><circle cx="7.6" cy="1.9000000000000001" r="2.1" fill="#8ecdf7"/></svg>
<svg style="left:1331.6px;top:95.6px" width="16" height="16" viewBox="0 0 16 16">
<rect x="0.8" y="0.8" width="11.4" height="9.4" fill="none" stroke="#c4c4c4" stroke-width="1.1" stroke-dasharray="3 2"/>
<path d="M10.6 8.2 L10.6 14.6 L12.1 13.2 L13.2 15.6 L14.2 15.1 L13.1 12.8 L15.2 12.7 Z" fill="#9a9a9a"/></svg>
<svg style="left:1380.8px;top:95px" width="9.6" height="13.4" viewBox="0 0 9.6 13.4">
<path d="M0.2 0.2 L0.2 11 L2.7 8.7 L4.6 13.1 L6.5 12.3 L4.6 8 L8.4 8 Z" fill="#3a3a3a"/></svg>
<svg style="left:1394px;top:99.6px" width="7" height="4.6" viewBox="0 0 7 4.6"><path d="M0.6 0.6 L3.5 3.6 L6.4 0.6" fill="none" stroke="#555" stroke-width="1.3" stroke-linecap="round" stroke-linejoin="round"/></svg>
<svg style="left:1413.6px;top:96.2px" width="13.6" height="11" viewBox="0 0 13.6 11">
<path d="M0.7 5.6 Q6.8 -1.6 12.9 5.6 Q6.8 12.4 0.7 5.6 Z" fill="none" stroke="#3a3a3a" stroke-width="1.2"/>
<path d="M4.6 5.4 A2.4 2.4 0 0 1 8 3.3" fill="none" stroke="#3a3a3a" stroke-width="1"/>
<path d="M9.3 0.6 L4.4 10.4" stroke="#3a3a3a" stroke-width="1.3"/></svg>
<svg style="left:1440px;top:96.3px" width="13.4" height="10.8" viewBox="0 0 13.4 10"><path d="M0.7 5.1 Q6.7 -1.5 12.7 5.1 Q6.7 11.1 0.7 5.1 Z" fill="#fff" fill-opacity="0.85" stroke="#3a3a3a" stroke-width="1.35" stroke-linejoin="round"/><circle cx="6.7" cy="4.7" r="2.75" fill="#3a3a3a"/><circle cx="5.8" cy="3.7" r="0.85" fill="#fff" fill-opacity="0.9"/></svg>
<div class="a" style="left:1629.6px;top:142px;width:249.4px;height:599.4px;background:rgba(245,245,245,0.9);border:1px solid #a9d6e8;border-radius:3px"></div>
<div class="a" style="left:1863.3px;top:143px;width:14.8px;height:584px;background:linear-gradient(90deg,#e2e2e2,#eeeeee 45%,#f1f1f1)"></div>
<div class="a" style="left:1866.4px;top:339.4px;width:8.6px;height:383.4px;background:linear-gradient(90deg,#dcdcdc,#c9c9c9);border:1px solid #9a9a9a;border-radius:4.3px"></div>
<svg style="left:1864px;top:727px" width="14" height="14" viewBox="0 0 14 14"><path d="M13.5 1 L1 13.5 M13.5 5 L5 13.5 M13.5 9 L9 13.5" stroke="#9a9a9a" stroke-width="1"/></svg>
<svg style="left:1710.8px;top:151.4px" width="12.6" height="8.8" viewBox="0 0 13.4 10"><path d="M0.7 5.1 Q6.7 -1.5 12.7 5.1 Q6.7 11.1 0.7 5.1 Z" fill="#fff" fill-opacity="0.85" stroke="#808080" stroke-width="1.35" stroke-linejoin="round"/><circle cx="6.7" cy="4.7" r="2.75" fill="#808080"/><circle cx="5.8" cy="3.7" r="0.85" fill="#fff" fill-opacity="0.9"/></svg>
<span class="t" style="left:1727.20px;top:156.09px;font-size:11px;color:#5d93b4;letter-spacing:-0.251px;">solid_0_RWflapa</span>
<svg style="left:1710.8px;top:177.4px" width="12.6" height="8.8" viewBox="0 0 13.4 10"><path d="M0.7 5.1 Q6.7 -1.5 12.7 5.1 Q6.7 11.1 0.7 5.1 Z" fill="#fff" fill-opacity="0.85" stroke="#808080" stroke-width="1.35" stroke-linejoin="round"/><circle cx="6.7" cy="4.7" r="2.75" fill="#808080"/><circle cx="5.8" cy="3.7" r="0.85" fill="#fff" fill-opacity="0.9"/></svg>
<span class="t" style="left:1727.20px;top:182.09px;font-size:11px;color:#2fa4f3;letter-spacing:-0.22px;">solid_0_body</span>
<svg style="left:1710.8px;top:203.4px" width="12.6" height="8.8" viewBox="0 0 13.4 10"><path d="M0.7 5.1 Q6.7 -1.5 12.7 5.1 Q6.7 11.1 0.7 5.1 Z" fill="#fff" fill-opacity="0.85" stroke="#808080" stroke-width="1.35" stroke-linejoin="round"/><circle cx="6.7" cy="4.7" r="2.75" fill="#808080"/><circle cx="5.8" cy="3.7" r="0.85" fill="#fff" fill-opacity="0.9"/></svg>
<span class="t" style="left:1727.20px;top:208.09px;font-size:11px;color:#5d93b4;letter-spacing:-0.211px;">solid_0_RWflapb</span>
<svg style="left:1710.8px;top:229.4px" width="12.6" height="8.8" viewBox="0 0 13.4 10"><path d="M0.7 5.1 Q6.7 -1.5 12.7 5.1 Q6.7 11.1 0.7 5.1 Z" fill="#fff" fill-opacity="0.85" stroke="#808080" stroke-width="1.35" stroke-linejoin="round"/><circle cx="6.7" cy="4.7" r="2.75" fill="#808080"/><circle cx="5.8" cy="3.7" r="0.85" fill="#fff" fill-opacity="0.9"/></svg>
<span class="t" style="left:1727.20px;top:234.09px;font-size:11px;color:#5d93b4;letter-spacing:-0.256px;">solid_0_RWflapc</span>
<svg style="left:1710.8px;top:255.4px" width="12.6" height="8.8" viewBox="0 0 13.4 10"><path d="M0.7 5.1 Q6.7 -1.5 12.7 5.1 Q6.7 11.1 0.7 5.1 Z" fill="#fff" fill-opacity="0.85" stroke="#808080" stroke-width="1.35" stroke-linejoin="round"/><circle cx="6.7" cy="4.7" r="2.75" fill="#808080"/><circle cx="5.8" cy="3.7" r="0.85" fill="#fff" fill-opacity="0.9"/></svg>
<span class="t" style="left:1727.20px;top:260.09px;font-size:11px;color:#5d93b4;letter-spacing:-0.211px;">solid_0_RWflapd</span>
<svg style="left:1710.8px;top:281.40000000000003px" width="12.6" height="8.8" viewBox="0 0 13.4 10"><path d="M0.7 5.1 Q6.7 -1.5 12.7 5.1 Q6.7 11.1 0.7 5.1 Z" fill="#fff" fill-opacity="0.85" stroke="#808080" stroke-width="1.35" stroke-linejoin="round"/><circle cx="6.7" cy="4.7" r="2.75" fill="#808080"/><circle cx="5.8" cy="3.7" r="0.85" fill="#fff" fill-opacity="0.9"/></svg>
<span class="t" style="left:1727.20px;top:286.09px;font-size:11px;color:#2fa4f3;letter-spacing:-0.237px;">solid_0_Radsupport</span>
<svg style="left:1710.8px;top:307.40000000000003px" width="12.6" height="8.8" viewBox="0 0 13.4 10"><path d="M0.7 5.1 Q6.7 -1.5 12.7 5.1 Q6.7 11.1 0.7 5.1 Z" fill="#fff" fill-opacity="0.85" stroke="#808080" stroke-width="1.35" stroke-linejoin="round"/><circle cx="6.7" cy="4.7" r="2.75" fill="#808080"/><circle cx="5.8" cy="3.7" r="0.85" fill="#fff" fill-opacity="0.9"/></svg>
<span class="t" style="left:1727.20px;top:312.09px;font-size:11px;color:#2fa4f3;letter-spacing:-0.329px;">solid_0_Rearsusp</span>
<svg style="left:1710.8px;top:333.40000000000003px" width="12.6" height="8.8" viewBox="0 0 13.4 10"><path d="M0.7 5.1 Q6.7 -1.5 12.7 5.1 Q6.7 11.1 0.7 5.1 Z" fill="#fff" fill-opacity="0.85" stroke="#808080" stroke-width="1.35" stroke-linejoin="round"/><circle cx="6.7" cy="4.7" r="2.75" fill="#808080"/><circle cx="5.8" cy="3.7" r="0.85" fill="#fff" fill-opacity="0.9"/></svg>
<span class="t" style="left:1727.20px;top:338.09px;font-size:11px;color:#5d93b4;letter-spacing:-0.176px;">solid_0_Reartire</span>
<svg style="left:1710.8px;top:359.40000000000003px" width="12.6" height="8.8" viewBox="0 0 13.4 10"><path d="M0.7 5.1 Q6.7 -1.5 12.7 5.1 Q6.7 11.1 0.7 5.1 Z" fill="#fff" fill-opacity="0.85" stroke="#808080" stroke-width="1.35" stroke-linejoin="round"/><circle cx="6.7" cy="4.7" r="2.75" fill="#808080"/><circle cx="5.8" cy="3.7" r="0.85" fill="#fff" fill-opacity="0.9"/></svg>
<span class="t" style="left:1727.20px;top:364.09px;font-size:11px;color:#5d93b4;letter-spacing:-0.233px;">solid_0_ReartireCP</span>
<svg style="left:1710.8px;top:385.40000000000003px" width="12.6" height="8.8" viewBox="0 0 13.4 10"><path d="M0.7 5.1 Q6.7 -1.5 12.7 5.1 Q6.7 11.1 0.7 5.1 Z" fill="#fff" fill-opacity="0.85" stroke="#808080" stroke-width="1.35" stroke-linejoin="round"/><circle cx="6.7" cy="4.7" r="2.75" fill="#808080"/><circle cx="5.8" cy="3.7" r="0.85" fill="#fff" fill-opacity="0.9"/></svg>
<span class="t" style="left:1727.20px;top:390.09px;font-size:11px;color:#2fa4f3;letter-spacing:-0.294px;">solid_0_Rearur</span>
<svg style="left:1710.8px;top:411.40000000000003px" width="12.6" height="8.8" viewBox="0 0 13.4 10"><path d="M0.7 5.1 Q6.7 -1.5 12.7 5.1 Q6.7 11.1 0.7 5.1 Z" fill="#fff" fill-opacity="0.85" stroke="#808080" stroke-width="1.35" stroke-linejoin="round"/><circle cx="6.7" cy="4.7" r="2.75" fill="#808080"/><circle cx="5.8" cy="3.7" r="0.85" fill="#fff" fill-opacity="0.9"/></svg>
<span class="t" style="left:1727.20px;top:416.09px;font-size:11px;color:#2fa4f3;letter-spacing:-0.229px;">solid_0_Sidepood</span>
<svg style="left:1710.8px;top:437.40000000000003px" width="12.6" height="8.8" viewBox="0 0 13.4 10"><path d="M0.7 5.1 Q6.7 -1.5 12.7 5.1 Q6.7 11.1 0.7 5.1 Z" fill="#fff" fill-opacity="0.85" stroke="#808080" stroke-width="1.35" stroke-linejoin="round"/><circle cx="6.7" cy="4.7" r="2.75" fill="#808080"/><circle cx="5.8" cy="3.7" r="0.85" fill="#fff" fill-opacity="0.9"/></svg>
<span class="t" style="left:1727.20px;top:442.09px;font-size:11px;color:#5d93b4;letter-spacing:-0.398px;">solid_0_RWEP</span>
<svg style="left:1710.8px;top:463.40000000000003px" width="12.6" height="8.8" viewBox="0 0 13.4 10"><path d="M0.7 5.1 Q6.7 -1.5 12.7 5.1 Q6.7 11.1 0.7 5.1 Z" fill="#fff" fill-opacity="0.85" stroke="#808080" stroke-width="1.35" stroke-linejoin="round"/><circle cx="6.7" cy="4.7" r="2.75" fill="#808080"/><circle cx="5.8" cy="3.7" r="0.85" fill="#fff" fill-opacity="0.9"/></svg>
<span class="t" style="left:1727.20px;top:468.09px;font-size:11px;color:#2fa4f3;letter-spacing:-0.109px;">solid_0_Frontur</span>
<svg style="left:1710.8px;top:489.40000000000003px" width="12.6" height="8.8" viewBox="0 0 13.4 10"><path d="M0.7 5.1 Q6.7 -1.5 12.7 5.1 Q6.7 11.1 0.7 5.1 Z" fill="#fff" fill-opacity="0.85" stroke="#808080" stroke-width="1.35" stroke-linejoin="round"/><circle cx="6.7" cy="4.7" r="2.75" fill="#808080"/><circle cx="5.8" cy="3.7" r="0.85" fill="#fff" fill-opacity="0.9"/></svg>
<span class="t" style="left:1727.20px;top:494.09px;font-size:11px;color:#5d93b4;letter-spacing:-0.093px;">solid_0_Fronttirecp</span>
<svg style="left:1710.8px;top:515.4px" width="12.6" height="8.8" viewBox="0 0 13.4 10"><path d="M0.7 5.1 Q6.7 -1.5 12.7 5.1 Q6.7 11.1 0.7 5.1 Z" fill="#fff" fill-opacity="0.85" stroke="#808080" stroke-width="1.35" stroke-linejoin="round"/><circle cx="6.7" cy="4.7" r="2.75" fill="#808080"/><circle cx="5.8" cy="3.7" r="0.85" fill="#fff" fill-opacity="0.9"/></svg>
<span class="t" style="left:1727.20px;top:520.09px;font-size:11px;color:#5d93b4;letter-spacing:-0.09px;">solid_0_Fronttire</span>
<svg style="left:1710.8px;top:541.4px" width="12.6" height="8.8" viewBox="0 0 13.4 10"><path d="M0.7 5.1 Q6.7 -1.5 12.7 5.1 Q6.7 11.1 0.7 5.1 Z" fill="#fff" fill-opacity="0.85" stroke="#808080" stroke-width="1.35" stroke-linejoin="round"/><circle cx="6.7" cy="4.7" r="2.75" fill="#808080"/><circle cx="5.8" cy="3.7" r="0.85" fill="#fff" fill-opacity="0.9"/></svg>
<span class="t" style="left:1727.20px;top:546.09px;font-size:11px;color:#2fa4f3;letter-spacing:-0.182px;">solid_0_Frontsusp</span>
<svg style="left:1710.8px;top:567.4px" width="12.6" height="8.8" viewBox="0 0 13.4 10"><path d="M0.7 5.1 Q6.7 -1.5 12.7 5.1 Q6.7 11.1 0.7 5.1 Z" fill="#fff" fill-opacity="0.85" stroke="#808080" stroke-width="1.35" stroke-linejoin="round"/><circle cx="6.7" cy="4.7" r="2.75" fill="#808080"/><circle cx="5.8" cy="3.7" r="0.85" fill="#fff" fill-opacity="0.9"/></svg>
<span class="t" style="left:1727.20px;top:572.09px;font-size:11px;color:#5d93b4;letter-spacing:-0.108px;">solid_0_FWmainwing</span>
<svg style="left:1710.8px;top:593.4px" width="12.6" height="8.8" viewBox="0 0 13.4 10"><path d="M0.7 5.1 Q6.7 -1.5 12.7 5.1 Q6.7 11.1 0.7 5.1 Z" fill="#fff" fill-opacity="0.85" stroke="#808080" stroke-width="1.35" stroke-linejoin="round"/><circle cx="6.7" cy="4.7" r="2.75" fill="#808080"/><circle cx="5.8" cy="3.7" r="0.85" fill="#fff" fill-opacity="0.9"/></svg>
<span class="t" style="left:1727.20px;top:598.09px;font-size:11px;color:#5d93b4;letter-spacing:-0.202px;">solid_0_FWflap</span>
<svg style="left:1710.8px;top:619.4px" width="12.6" height="8.8" viewBox="0 0 13.4 10"><path d="M0.7 5.1 Q6.7 -1.5 12.7 5.1 Q6.7 11.1 0.7 5.1 Z" fill="#fff" fill-opacity="0.85" stroke="#808080" stroke-width="1.35" stroke-linejoin="round"/><circle cx="6.7" cy="4.7" r="2.75" fill="#808080"/><circle cx="5.8" cy="3.7" r="0.85" fill="#fff" fill-opacity="0.9"/></svg>
<span class="t" style="left:1727.20px;top:624.09px;font-size:11px;color:#5d93b4;letter-spacing:-0.223px;">solid_0_FWEPout</span>
<svg style="left:1710.8px;top:645.4px" width="12.6" height="8.8" viewBox="0 0 13.4 10"><path d="M0.7 5.1 Q6.7 -1.5 12.7 5.1 Q6.7 11.1 0.7 5.1 Z" fill="#fff" fill-opacity="0.85" stroke="#808080" stroke-width="1.35" stroke-linejoin="round"/><circle cx="6.7" cy="4.7" r="2.75" fill="#808080"/><circle cx="5.8" cy="3.7" r="0.85" fill="#fff" fill-opacity="0.9"/></svg>
<span class="t" style="left:1727.20px;top:650.09px;font-size:11px;color:#5d93b4;letter-spacing:-0.266px;">solid_0_FWEPin</span>
<svg style="left:1710.8px;top:671.4px" width="12.6" height="8.8" viewBox="0 0 13.4 10"><path d="M0.7 5.1 Q6.7 -1.5 12.7 5.1 Q6.7 11.1 0.7 5.1 Z" fill="#fff" fill-opacity="0.85" stroke="#808080" stroke-width="1.35" stroke-linejoin="round"/><circle cx="6.7" cy="4.7" r="2.75" fill="#808080"/><circle cx="5.8" cy="3.7" r="0.85" fill="#fff" fill-opacity="0.9"/></svg>
<span class="t" style="left:1727.20px;top:676.09px;font-size:11px;color:#2fa4f3;letter-spacing:-0.051px;">solid_0_Driver</span>
<svg style="left:1710.8px;top:697.4px" width="12.6" height="8.8" viewBox="0 0 13.4 10"><path d="M0.7 5.1 Q6.7 -1.5 12.7 5.1 Q6.7 11.1 0.7 5.1 Z" fill="#fff" fill-opacity="0.85" stroke="#808080" stroke-width="1.35" stroke-linejoin="round"/><circle cx="6.7" cy="4.7" r="2.75" fill="#808080"/><circle cx="5.8" cy="3.7" r="0.85" fill="#fff" fill-opacity="0.9"/></svg>
<span class="t" style="left:1727.20px;top:702.09px;font-size:11px;color:#5d93b4;letter-spacing:-0.068px;">solid_0_Diffuser</span>
<svg style="left:1710.8px;top:723.4px" width="12.6" height="8.8" viewBox="0 0 13.4 10"><path d="M0.7 5.1 Q6.7 -1.5 12.7 5.1 Q6.7 11.1 0.7 5.1 Z" fill="#fff" fill-opacity="0.85" stroke="#808080" stroke-width="1.35" stroke-linejoin="round"/><circle cx="6.7" cy="4.7" r="2.75" fill="#808080"/><circle cx="5.8" cy="3.7" r="0.85" fill="#fff" fill-opacity="0.9"/></svg>
<span class="t" style="left:1727.20px;top:728.09px;font-size:11px;color:#2fa4f3;letter-spacing:-0.267px;">solid_0_Barre</span>
<svg style="left:771px;top:820px" width="240" height="200" viewBox="771 820 240 200">
<g fill="none" stroke="#b9b9b9" stroke-width="1.4" stroke-linejoin="miter">
<polygon points="850.4,844.2 871.4,844.2 860.9,833.8"/>
<polygon points="850.9,975.7 870.9,975.7 860.9,986.3"/>
<polygon points="795.3,900.4 795.3,919.5 785,909.9"/>
<polygon points="926.9,900.4 926.9,919.5 937,909.9"/>
<path d="M913 973.6 L923 964 L933 973.6 L930.3 973.6 L930.3 982.4 L925.3 982.4 L925.3 976.6 L920.7 976.6 L920.7 982.4 L915.7 982.4 L915.7 973.6 Z"/>
<path d="M783.2 949.6 L791.2 942 L799 949.6 L795.6 949.6 Q795.4 961.5 801.8 967.8 L797 973.8 Q787.6 965 787 949.6 Z"/>
<path d="M798.4 975.2 L803 969.4 Q811 974.4 821.6 974.2 L821.4 971 L829.6 979.4 L821.8 987.6 L821.7 984.4 Q808 985.2 798.4 975.2 Z"/>
</g>
<polygon points="816.3,889.8 832.8,874.6 892.3,868.8 884.6,883.8" fill="#e4e4e4" stroke="#8a8a8a" stroke-width="1.5" stroke-linejoin="round"/>
<polygon points="884.6,883.8 892.3,868.8 899.4,921 893,950" fill="#dcdcdc" stroke="#8a8a8a" stroke-width="1.4" stroke-linejoin="round"/>
<polygon points="816.3,889.8 884.6,883.8 893,950 826.9,953.3" fill="#e6e6e6" stroke="#8a8a8a" stroke-width="1.5" stroke-linejoin="round"/>
<g stroke="#aaa" stroke-width="0.8"><path d="M850.5 879.5 L860.5 876 M851.5 881.5 L861.5 878 M852.5 883.5 L860 881"/><path d="M890.5 905 L894.5 899 M890.8 910 L895 903 M891.3 914 L895.4 908"/></g>
<text transform="translate(860.3,919.6) rotate(-84)" font-family="Liberation Sans, sans-serif" font-weight="bold" font-size="12" fill="#818181" text-anchor="middle" letter-spacing="0.3">LEFT</text>
<path d="M893 950 L884.2 875.5" stroke="#8a8be6" stroke-width="1.5"/><path d="M883.6 871.6 L886.6 879.8 L882.4 880.2 Z" fill="#7d7ee4"/>
<path d="M893 950 L900.2 924.8" stroke="#e57f7f" stroke-width="1.5"/>
<path d="M893 950 L821 954.2" stroke="#7ed48a" stroke-width="1.5"/><path d="M816.6 954.5 L822.4 952.4 L822.7 956.2 Z" fill="#7ed48a"/>
<text x="877.3" y="866.9" font-family="Liberation Sans, sans-serif" font-weight="bold" font-size="16" fill="#7c7ce3">Z</text>
<text x="896" y="925.4" font-family="Liberation Sans, sans-serif" font-weight="bold" font-size="11" fill="#e67878">X</text>
<text x="804" y="958.2" font-family="Liberation Sans, sans-serif" font-weight="bold" font-size="13" fill="#72d07e">Y</text>
</svg>
<div class="a" style="left:781.5px;top:1015.4px;width:199px;height:16.8px;background:rgba(232,232,232,0.75);border:1px solid #c3dde6"></div>
<svg style="left:966px;top:1017px" width="14" height="14" viewBox="0 0 14 14"><path d="M13.5 1 L1 13.5 M13.5 5 L5 13.5 M13.5 9 L9 13.5" stroke="#aaa" stroke-width="1"/></svg>
<div class="a" style="left:1664.2px;top:1012px;width:145.5px;height:30px;background:#005c9c;border-radius:3px 3px 0 0;border-top:1px solid #0a6cb0"></div>
<div class="a" style="left:1812px;top:1012px;width:78px;height:30px;background:#005c9c;border-radius:3px 3px 0 0;border-top:1px solid #0a6cb0"></div>
<svg style="left:1672.6px;top:1019.8px" width="28" height="18" viewBox="0 0 28 18">
<ellipse cx="13.6" cy="8.8" rx="13.6" ry="8.8" fill="#fff"/><path d="M19 14 L26.5 17.6 L22.5 11 Z" fill="#fff"/>
<rect x="6.6" y="4.8" width="14" height="9" rx="1" fill="#005c9c"/><rect x="15" y="3.4" width="4" height="2.4" fill="#005c9c"/>
<circle cx="13.4" cy="9.3" r="2.9" fill="#fff"/><circle cx="13.4" cy="9.3" r="1.7" fill="#005c9c"/></svg>
<span class="t" style="left:1708.30px;top:1029.12px;font-size:13.5px;color:#fff;letter-spacing:-0.191px;">Report an issue</span>
<svg style="left:1825px;top:1022.4px" width="16.6" height="14.6" viewBox="0 0 16.6 14.6">
<rect x="0" y="0" width="16.6" height="10.6" rx="1.2" fill="#fff"/><path d="M2.6 10 L2.6 14.6 L7.2 10 Z" fill="#fff"/></svg>
<span class="t" style="left:1852.50px;top:1029.12px;font-size:13.5px;color:#fff;letter-spacing:-0.333px;">Chat</span>
</div>
</body></html>
